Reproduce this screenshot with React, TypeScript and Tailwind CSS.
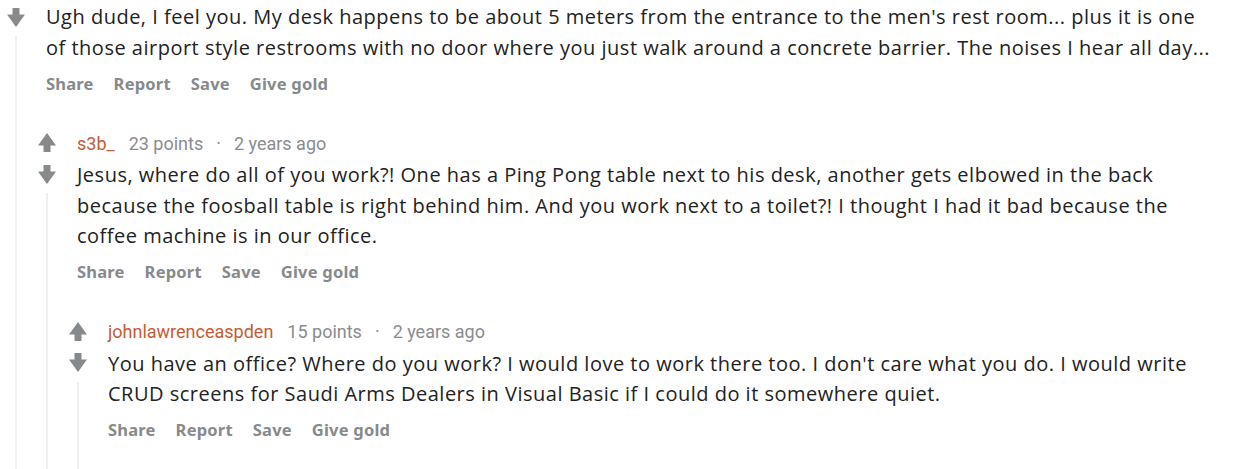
import React from 'react';

interface Comment {
  id: string;
  author?: string;
  points?: number;
  age?: string;
  lines: string[];
  children?: Comment[];
}

const thread: Comment = {
  id: 'c1',
  lines: [
    "Ugh dude, I feel you. My desk happens to be about 5 meters from the entrance to the men's rest room... plus it is one",
    'of those airport style restrooms with no door where you just walk around a concrete barrier. The noises I hear all day...',
  ],
  children: [
    {
      id: 'c2',
      author: 's3b_',
      points: 23,
      age: '2 years ago',
      lines: [
        'Jesus, where do all of you work?! One has a Ping Pong table next to his desk, another gets elbowed in the back',
        'because the foosball table is right behind him. And you work next to a toilet?! I thought I had it bad because the',
        'coffee machine is in our office.',
      ],
      children: [
        {
          id: 'c3',
          author: 'johnlawrenceaspden',
          points: 15,
          age: '2 years ago',
          lines: [
            "You have an office? Where do you work? I would love to work there too. I don't care what you do. I would write",
            'CRUD screens for Saudi Arms Dealers in Visual Basic if I could do it somewhere quiet.',
          ],
        },
      ],
    },
  ],
};

function Arrow({ up }: { up?: boolean }) {
  return (
    <svg
      width="18"
      height="19"
      viewBox="0 0 18 19"
      className={up ? 'rotate-180' : ''}
    >
      <path d="M5.5 0h7v6.5H18L9 19 0 6.5h5.5z" fill="#878a8c" />
    </svg>
  );
}

function CommentNode({ comment }: { comment: Comment }) {
  const hasHeader = !!comment.author;
  return (
    <div className="flex">
      <div className="flex w-[31px] shrink-0 flex-col items-center">
        {hasHeader && (
          <div className="flex h-[31px] items-center">
            <Arrow up />
          </div>
        )}
        <div className="flex h-[32px] items-center">
          <Arrow />
        </div>
        <div className="mt-[3px] w-[2px] flex-1 bg-[#edeff1]" />
      </div>
      <div className="min-w-0 flex-1">
        <div className="pl-[15px]">
          {hasHeader && (
            <div className="flex h-[32px] items-center font-['Roboto',sans-serif] text-[18px] text-[#8a8c8e]">
              <span className="mr-[14px] text-[#c65b34]">{comment.author}</span>
              <span>{comment.points} points</span>
              <span className="px-[13px]">·</span>
              <span>{comment.age}</span>
            </div>
          )}
          <div className="pt-[1px]">
            {comment.lines.map((l, i) => (
              <p
                key={i}
                className="whitespace-nowrap font-['Open_Sans',sans-serif] text-[20px] leading-[30.5px] tracking-[0.5px] text-[#222222]"
              >
                {l}
              </p>
            ))}
          </div>
          <div className="mt-[7px] flex h-[28px] items-center gap-[20px] font-['Noto_Sans',sans-serif] text-[16.5px] font-bold tracking-[0.2px] text-[#878a8c]">
            <span>Share</span>
            <span>Report</span>
            <span>Save</span>
            <span>Give gold</span>
          </div>
        </div>
        <div className="pt-[29px]">
          {comment.children?.map((c) => (
            <CommentNode key={c.id} comment={c} />
          ))}
        </div>
      </div>
    </div>
  );
}

export default function App() {
  return (
    <div className="h-[469px] w-[1240px] overflow-hidden bg-white pt-[1px]">
      <CommentNode comment={thread} />
    </div>
  );
}
